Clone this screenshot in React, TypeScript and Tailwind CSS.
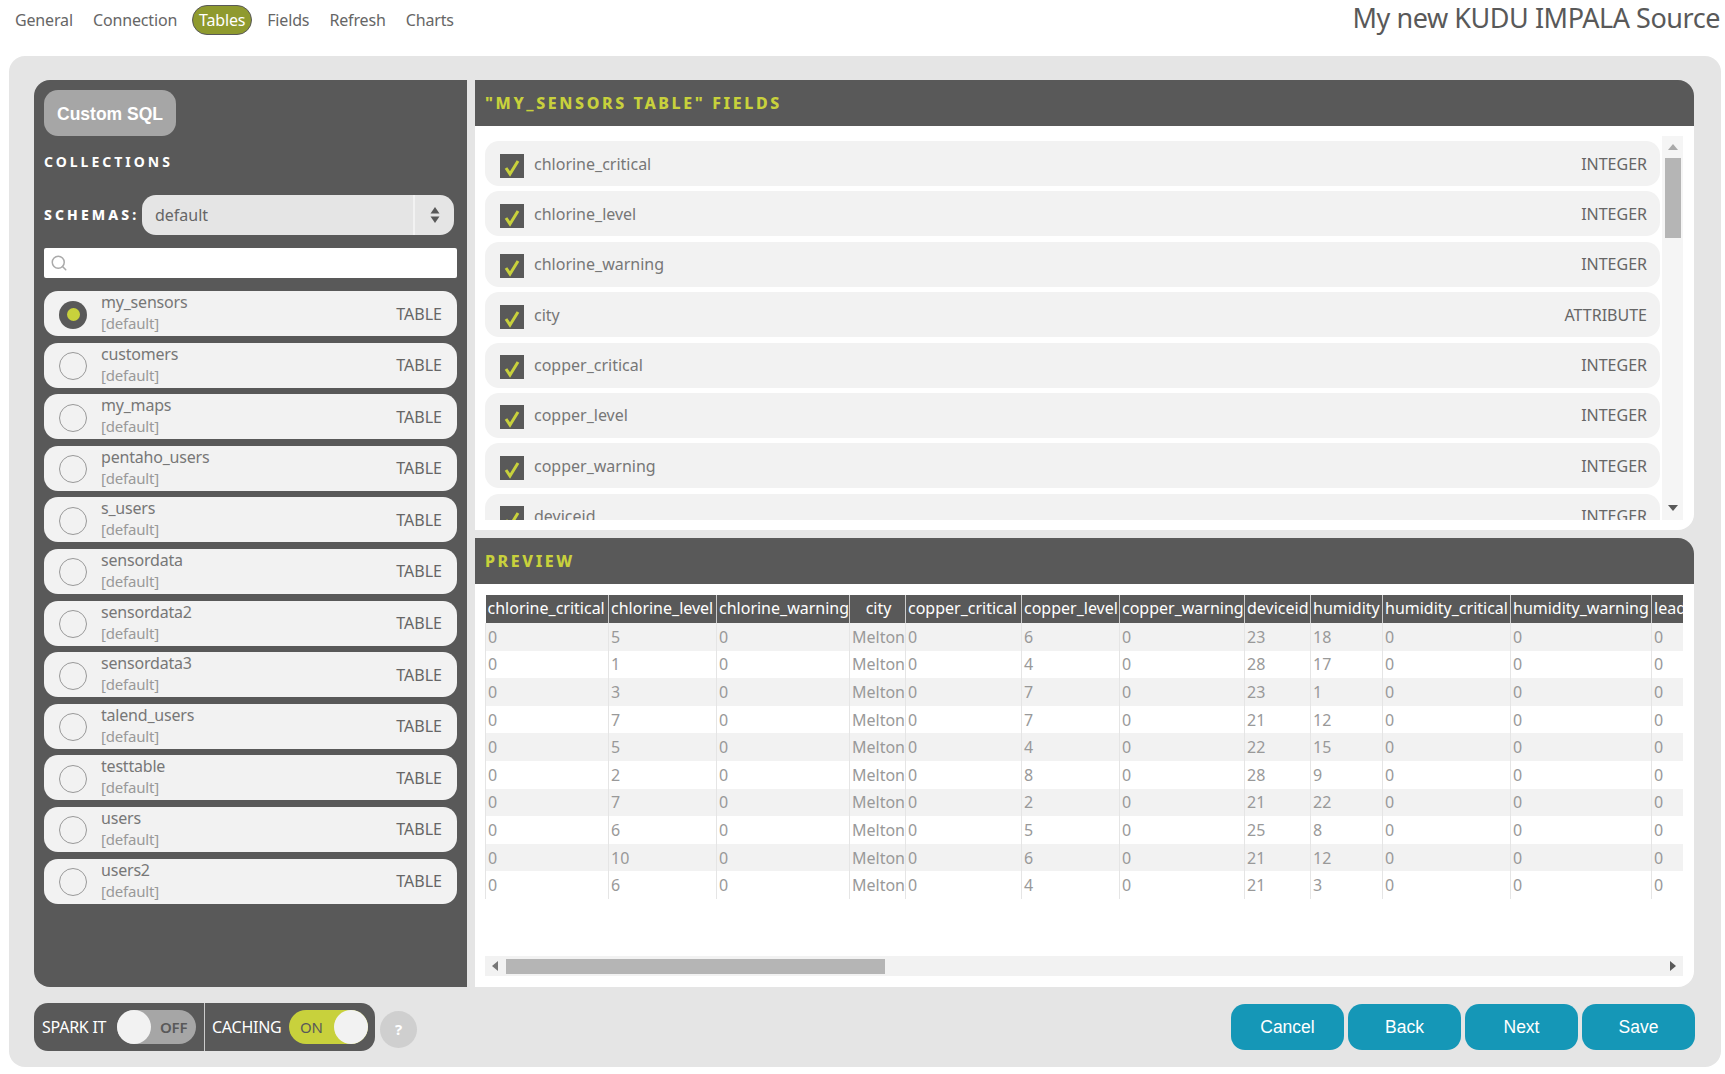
import React from 'react';
import { Search } from 'lucide-react';

const tabs = ['General', 'Connection', 'Tables', 'Fields', 'Refresh', 'Charts'];

const collections = [
  'my_sensors',
  'customers',
  'my_maps',
  'pentaho_users',
  's_users',
  'sensordata',
  'sensordata2',
  'sensordata3',
  'talend_users',
  'testtable',
  'users',
  'users2',
];

const fields = [
  ['chlorine_critical', 'INTEGER'],
  ['chlorine_level', 'INTEGER'],
  ['chlorine_warning', 'INTEGER'],
  ['city', 'ATTRIBUTE'],
  ['copper_critical', 'INTEGER'],
  ['copper_level', 'INTEGER'],
  ['copper_warning', 'INTEGER'],
  ['deviceid', 'INTEGER'],
];

const columns = [
  { name: 'chlorine_critical', width: 'w-[123px]' },
  { name: 'chlorine_level', width: 'w-[108px]' },
  { name: 'chlorine_warning', width: 'w-[133px]' },
  { name: 'city', width: 'w-[56px]' },
  { name: 'copper_critical', width: 'w-[116px]' },
  { name: 'copper_level', width: 'w-[98px]' },
  { name: 'copper_warning', width: 'w-[125px]' },
  { name: 'deviceid', width: 'w-[66px]' },
  { name: 'humidity', width: 'w-[72px]' },
  { name: 'humidity_critical', width: 'w-[128px]' },
  { name: 'humidity_warning', width: 'w-[141px]' },
  { name: 'lead', width: 'w-[32px]' },
];

const rows = [
  [5, 6, 23, 18],
  [1, 4, 28, 17],
  [3, 7, 23, 1],
  [7, 7, 21, 12],
  [5, 4, 22, 15],
  [2, 8, 28, 9],
  [7, 2, 21, 22],
  [6, 5, 25, 8],
  [10, 6, 21, 12],
  [6, 4, 21, 3],
];

const SectionHeader = ({ title }: { title: string }) => (
  <div className="h-[46px] shrink-0 bg-[#595959] flex items-center pl-[10px] rounded-tr-[16px]">
    <h2 className="text-[16px] font-extrabold tracking-[2.6px] text-[#c8d13c]">{title}</h2>
  </div>
);

const CollectionRow = ({ name, selected }: { name: string; selected: boolean }) => (
  <div className="h-[45px] rounded-[14px] bg-[#f2f2f2] flex items-center pl-[15px] pr-[15px]">
    {selected ? (
      <span className="w-[28px] h-[28px] mt-[2px] rounded-full bg-[#595959] flex items-center justify-center">
        <span className="w-[13px] h-[13px] rounded-full bg-[#c8d13c]" />
      </span>
    ) : (
      <span className="w-[28px] h-[28px] mt-[2px] rounded-full border border-[#999999]" />
    )}
    <div className="ml-[14px] pb-[1px] flex-1 text-[16px] leading-[21px] text-[#777777]">
      <div className="tracking-[-0.2px]">{name}</div>
      <div className="text-[15px] text-[#999999] tracking-[-0.2px]">[default]</div>
    </div>
    <span className="text-[16px] text-[#666666]">TABLE</span>
  </div>
);

const FieldRow = ({ name, type }: { name: string; type: string }) => (
  <div className="h-[45px] shrink-0 rounded-[14px] bg-[#f2f2f2] flex items-center pl-[15px] pr-[13px]">
    <span className="w-[24px] h-[24px] mt-[4px] bg-[#595959] flex items-center justify-center">
      <svg width="24" height="24" viewBox="0 0 24 24" fill="none" className="stroke-[#c8d13c]" strokeWidth="3">
        <path d="M6 14 L10 20 L18 7" />
      </svg>
    </span>
    <span className="ml-[10px] flex-1 text-[16px] text-[#777777]">{name}</span>
    <span className="text-[16px] text-[#666666]">{type}</span>
  </div>
);

const Toggle = ({ on }: { on: boolean }) => (
  <div className={`w-[79px] h-[34px] rounded-full flex items-center text-[15px] ${on ? 'bg-[#c8d13c] text-[#595959]' : 'bg-[#a6a6a6] text-[#595959] font-semibold'}`}>
    {on ? (
      <>
        <span className="ml-[11px] flex-1">ON</span>
        <span className="w-[34px] h-[34px] rounded-full bg-[#f2f2f2]" />
      </>
    ) : (
      <>
        <span className="w-[34px] h-[34px] rounded-full bg-[#f2f2f2]" />
        <span className="ml-[9px]">OFF</span>
      </>
    )}
  </div>
);

const FooterButton = ({ label }: { label: string }) => (
  <button className="w-[113px] h-[46px] rounded-[14px] bg-[#1597b7] text-white text-[17.5px] font-['Liberation_Sans',sans-serif]">
    {label}
  </button>
);

export default function App() {
  return (
    <div className="w-[1725px] h-[1074px] bg-white overflow-hidden font-['Noto_Sans',sans-serif]">
      <div className="h-[56px] flex justify-between pr-[5px]">
        <nav className="flex items-start pt-[5px] pl-[15px] gap-[20px] text-[16px] tracking-[-0.15px] text-[#666666]">
          {tabs.map((tab) =>
            tab === 'Tables' ? (
              <span key={tab} className="-mx-[5px] w-[60px] h-[30px] rounded-full bg-[#8f9a2e] border border-[#595959] text-white flex items-center justify-center">
                {tab}
              </span>
            ) : (
              <span key={tab} className="h-[30px] flex items-center">
                {tab}
              </span>
            ),
          )}
        </nav>
        <h1 className="text-[27px] leading-[36px] tracking-[-0.45px] text-[#595959]">My new KUDU IMPALA Source</h1>
      </div>

      <div className="ml-[9px] w-[1712px] h-[1011px] rounded-[16px] bg-[#e5e5e5] pt-[24px] pl-[25px] pr-[27px]">
        <div className="flex gap-[8px] h-[907px]">
          <aside className="w-[433px] shrink-0 bg-[#595959] rounded-l-[16px] pt-[10px] pl-[10px] pr-[10px]">
            <button className="w-[132px] h-[46px] pt-[2px] rounded-[14px] bg-[#a6a6a6] text-white font-bold text-[17.5px] font-['Liberation_Sans',sans-serif]">
              Custom SQL
            </button>
            <h3 className="mt-[16px] h-[20px] leading-[20px] text-white text-[14px] font-bold tracking-[3px]">COLLECTIONS</h3>
            <div className="mt-[23px] flex items-center">
              <span className="w-[98px] pb-[2px] text-white text-[14px] font-extrabold tracking-[3.1px] whitespace-nowrap">SCHEMAS:</span>
              <div className="w-[312px] h-[40px] rounded-[14px] bg-[#e5e5e5] flex items-center text-[16px] text-[#666666]">
                <span className="flex-1 pl-[13px]">default</span>
                <span className="w-[41px] h-full border-l-2 border-[#f2f2f2] flex items-center justify-center">
                  <svg width="10" height="16" viewBox="0 0 10 16" className="fill-[#595959]">
                    <path d="M5 0 L9.5 6.5 H0.5 Z" />
                    <path d="M5 16 L9.5 9.5 H0.5 Z" />
                  </svg>
                </span>
              </div>
            </div>
            <div className="mt-[13px] h-[30px] rounded-[2px] bg-white flex items-center pl-[6px]">
              <Search size={18} className="text-[#aaaaaa]" />
            </div>
            <div className="mt-[13px] flex flex-col gap-[6.6px]">
              {collections.map((name, i) => (
                <CollectionRow key={name} name={name} selected={i === 0} />
              ))}
            </div>
          </aside>

          <main className="flex-1 flex flex-col">
            <SectionHeader title={'"MY_SENSORS TABLE" FIELDS'} />
            <div className="h-[404px] shrink-0 bg-white rounded-br-[16px] pt-[10px] pl-[10px] pr-[11px] flex">
              <div className="w-[1175px] h-[384px] overflow-hidden pt-[5px] flex flex-col gap-[5.4px]">
                {fields.map(([name, type]) => (
                  <FieldRow key={name} name={name} type={type} />
                ))}
              </div>
              <div className="ml-[2px] w-[21px] h-[384px] bg-[#f5f5f5] flex flex-col items-center">
                <svg width="10" height="6" viewBox="0 0 10 6" className="mt-[8px] fill-[#aaaaaa]">
                  <path d="M5 0 L10 6 H0 Z" />
                </svg>
                <div className="mt-[8px] w-[16px] h-[80px] bg-[#b5b5b5]" />
                <svg width="10" height="6" viewBox="0 0 10 6" className="mt-auto mb-[9px] fill-[#595959]">
                  <path d="M5 6 L10 0 H0 Z" />
                </svg>
              </div>
            </div>

            <div className="h-[8px] shrink-0" />
            <SectionHeader title="PREVIEW" />
            <div className="flex-1 bg-white rounded-br-[16px] pt-[11px] pl-[10px] pr-[11px] flex flex-col">
              <div className="w-[1198px] h-[361px] overflow-hidden">
                <table className="w-[1198px] table-fixed border-collapse text-[16px]">
                  <colgroup>
                    {columns.map((col) => (
                      <col key={col.name} className={col.width} />
                    ))}
                  </colgroup>
                  <thead>
                    <tr className="h-[28px] bg-[#595959] text-white">
                      {columns.map((col) => (
                        <th
                          key={col.name}
                          className={`border-l border-[#cccccc] first:border-l-0 pl-[2px] pb-[3px] font-normal whitespace-nowrap overflow-hidden ${col.name === 'city' ? 'text-center' : 'text-left'}`}
                        >
                          {col.name}
                        </th>
                      ))}
                    </tr>
                  </thead>
                  <tbody>
                    {rows.map((r, i) => {
                      const cells = [0, r[0], 0, 'Melton', 0, r[1], 0, r[2], r[3], 0, 0, 0];
                      return (
                        <tr key={i} className={`h-[27.6px] text-[#999999] ${i % 2 === 0 ? 'bg-[#f2f2f2]' : 'bg-white'}`}>
                          {cells.map((cell, j) => (
                            <td key={j} className="border-l border-[#e5e5e5] pl-[2px] whitespace-nowrap overflow-hidden">
                              {cell}
                            </td>
                          ))}
                        </tr>
                      );
                    })}
                  </tbody>
                </table>
              </div>
              <div className="w-[1198px] h-[20px] bg-[#f2f2f2] flex items-center">
                <svg width="6" height="10" viewBox="0 0 6 10" className="ml-[7px] fill-[#777777]">
                  <path d="M0 5 L6 0 V10 Z" />
                </svg>
                <div className="ml-[8px] w-[379px] h-[15px] bg-[#b5b5b5]" />
                <svg width="6" height="10" viewBox="0 0 6 10" className="ml-auto mr-[7px] fill-[#595959]">
                  <path d="M6 5 L0 0 V10 Z" />
                </svg>
              </div>
            </div>
          </main>
        </div>

        <footer className="mt-[16px] flex items-start justify-between">
          <div className="flex items-center">
            <div className="w-[341px] h-[48px] rounded-[14px] bg-[#595959] flex items-center text-white text-[16px] tracking-[-0.25px]">
              <span className="ml-[8px] w-[75px] whitespace-nowrap">SPARK IT</span>
              <Toggle on={false} />
              <span className="ml-[8px] h-full border-l border-[#cccccc]" />
              <span className="ml-[7px] w-[77px]">CACHING</span>
              <Toggle on />
            </div>
            <span className="ml-[5px] mt-[4px] w-[37px] h-[37px] rounded-full bg-[#cfcfcf] text-white font-bold text-[15px] flex items-center justify-center">
              ?
            </span>
          </div>
          <div className="flex gap-[4px] pt-[1px] -mr-[1px]">
            {['Cancel', 'Back', 'Next', 'Save'].map((label) => (
              <FooterButton key={label} label={label} />
            ))}
          </div>
        </footer>
      </div>
    </div>
  );
}
